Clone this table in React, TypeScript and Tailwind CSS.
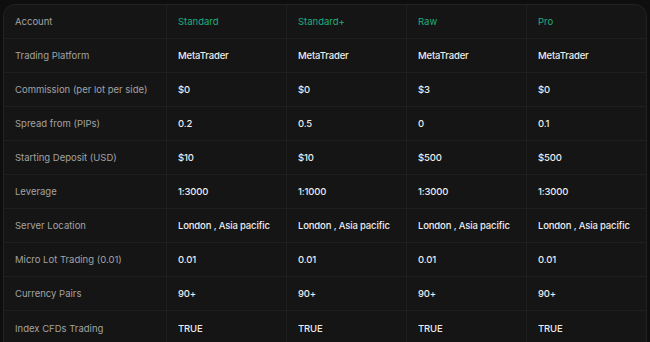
import React from "react";

const cols = ["Standard", "Standard+", "Raw", "Pro"];
const rows: [string, string[]][] = [
  ["Trading Platform", ["MetaTrader", "MetaTrader", "MetaTrader", "MetaTrader"]],
  ["Commission (per lot per side)", ["$0", "$0", "$3", "$0"]],
  ["Spread from (PIPs)", ["0.2", "0.5", "0", "0.1"]],
  ["Starting Deposit (USD)", ["$10", "$10", "$500", "$500"]],
  ["Leverage", ["1:3000", "1:1000", "1:3000", "1:3000"]],
  ["Server Location", ["London , Asia pacific", "London , Asia pacific", "London , Asia pacific", "London , Asia pacific"]],
  ["Micro Lot Trading (0.01)", ["0.01", "0.01", "0.01", "0.01"]],
  ["Currency Pairs", ["90+", "90+", "90+", "90+"]],
  ["Index CFDs Trading", ["TRUE", "TRUE", "TRUE", "TRUE"]],
];

export default function App() {
  return (
    <div
      className="w-[650px] h-[342px] overflow-hidden bg-[#0e0e0e] pt-[4px] pl-[3px] pr-[3px]"
      style={{ fontFamily: "Inter, 'Noto Sans', sans-serif" }}
    >
      <div className="rounded-t-[12px] border border-[#222222] bg-[#151515] overflow-hidden">
        <div className="grid grid-cols-[162px_120px_120px_120px_120px]">
          <div className="h-[34px] flex items-center pl-[11px] pt-[2px] text-[9.5px] text-[#a3a3a3] border-b border-[#1f1f1f]">
            Account
          </div>
          {cols.map((c) => (
            <div
              key={c}
              className="h-[34px] flex items-center pl-[11px] pt-[2px] text-[9.5px] text-[#1fae7c] border-b border-l border-[#1f1f1f]"
            >
              {c}
            </div>
          ))}
          {rows.map(([label, vals], i) => (
            <React.Fragment key={label}>
              <div
                className={`h-[34px] flex items-center pl-[11px] pt-[2px] text-[9.5px] text-[#a3a3a3] ${
                  i < rows.length - 1 ? "border-b" : ""
                } border-[#1f1f1f]`}
              >
                {label}
              </div>
              {vals.map((v, j) => (
                <div
                  key={j}
                  className={`h-[34px] flex items-center pl-[11px] pt-[2px] text-[9.5px] font-medium tracking-[-0.15px] text-[#ececec] border-l ${
                    i < rows.length - 1 ? "border-b" : ""
                  } border-[#1f1f1f]`}
                >
                  {v}
                </div>
              ))}
            </React.Fragment>
          ))}
        </div>
      </div>
    </div>
  );
}
